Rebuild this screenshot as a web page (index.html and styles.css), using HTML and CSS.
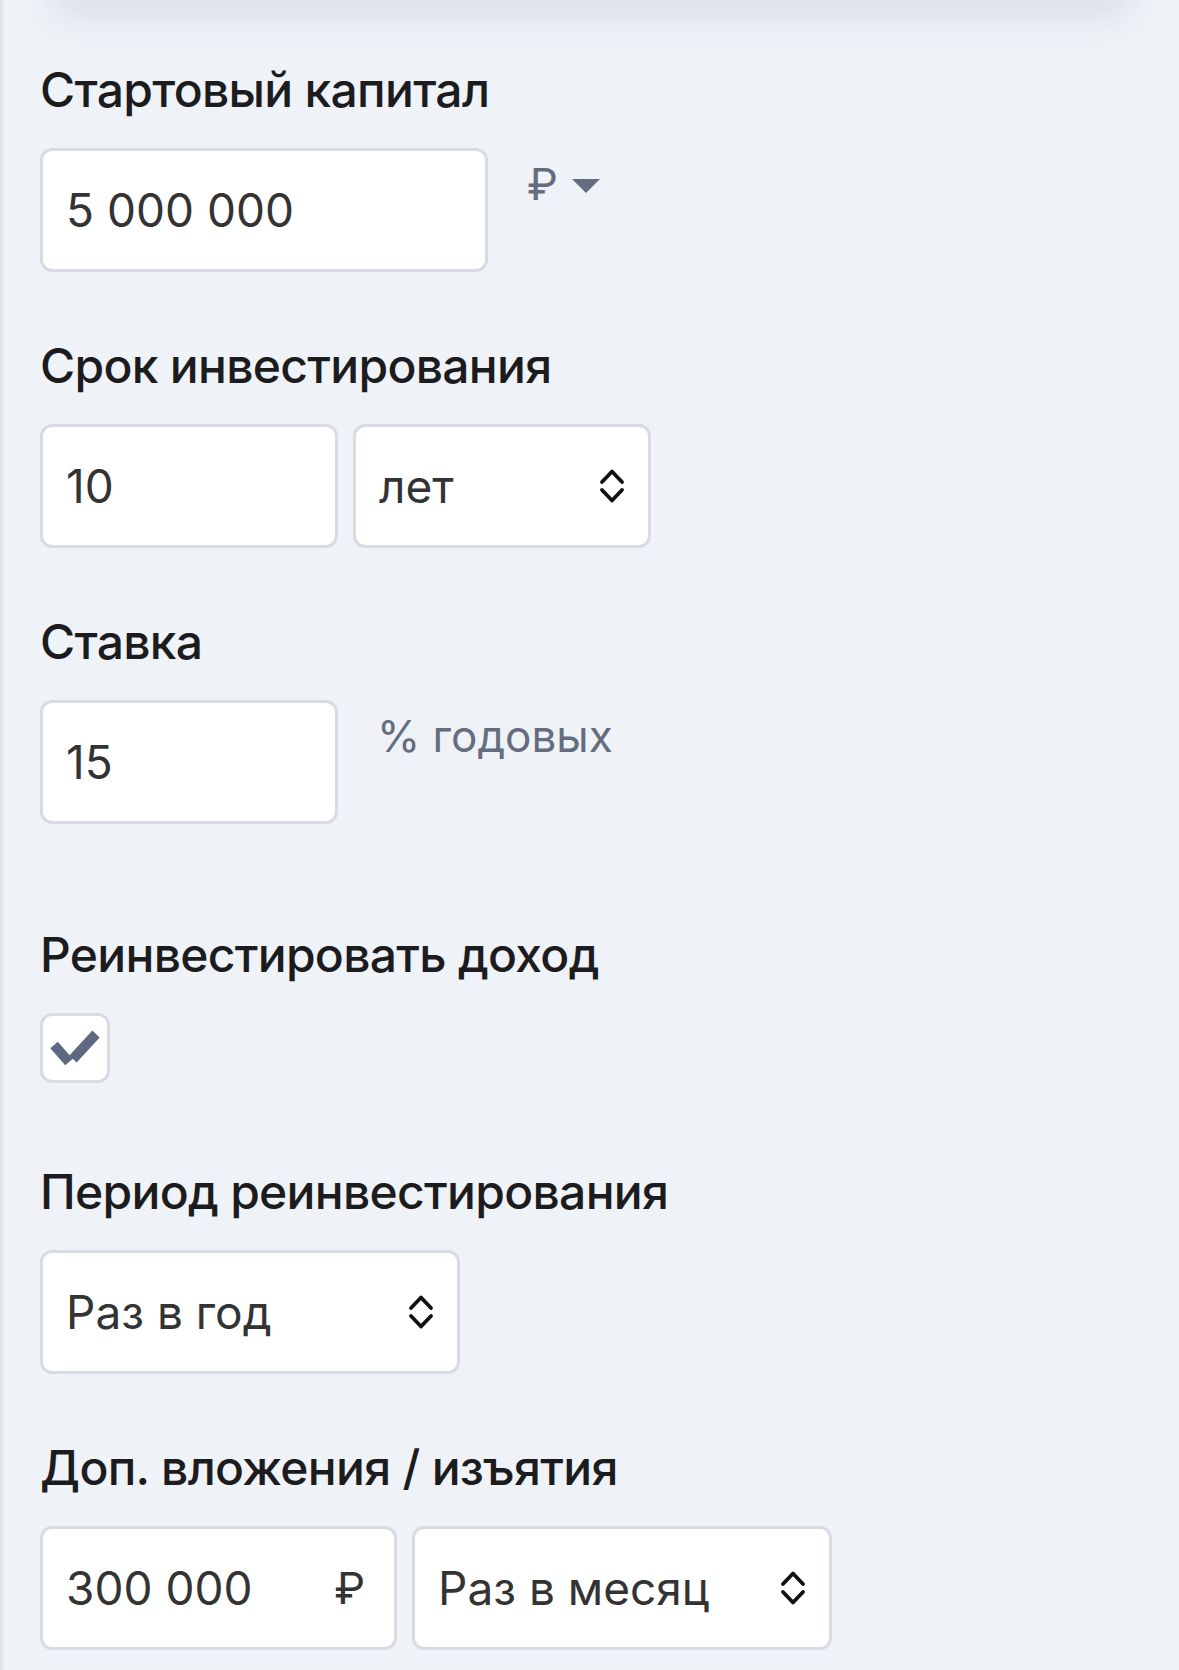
FILE: index.html
```html
<!DOCTYPE html>
<html lang="ru">
<head>
    <meta charset="UTF-8">
    <meta name="viewport" content="width=device-width, initial-scale=1.0">
    <title>Калькулятор сложного процента</title>
    <link rel="stylesheet" href="styles.css">
</head>
<body>
    <div class="card-edge"></div>
    <main class="form">
        <div class="field">
            <label class="field-label" for="capital">Стартовый капитал</label>
            <div class="field-row">
                <input class="control w-capital" id="capital" type="text" value="5 000 000">
                <div class="suffix currency">
                    <span>₽</span>
                    <svg class="caret" width="28" height="14" viewBox="0 0 28 14"><polygon points="0,0 28,0 14,14" fill="#646d80"/></svg>
                </div>
            </div>
        </div>

        <div class="field">
            <label class="field-label" for="term">Срок инвестирования</label>
            <div class="field-row">
                <input class="control w-short" id="term" type="text" value="10">
                <div class="select-wrap w-short">
                    <select class="control select">
                        <option>лет</option>
                        <option>месяцев</option>
                    </select>
                    <svg class="chevrons" width="26" height="36" viewBox="0 0 26 36"><path d="M3 14 L13 3.5 L23 14 M3 22 L13 32.5 L23 22" fill="none" stroke="#111" stroke-width="3.8" stroke-linecap="round" stroke-linejoin="round"/></svg>
                </div>
            </div>
        </div>

        <div class="field">
            <label class="field-label" for="rate">Ставка</label>
            <div class="field-row">
                <input class="control w-short" id="rate" type="text" value="15">
                <div class="suffix">% годовых</div>
            </div>
        </div>

        <div class="field field-check">
            <div class="field-label">Реинвестировать доход</div>
            <label class="checkbox">
                <input type="checkbox" checked>
                <span class="box">
                    <svg width="64" height="64" viewBox="0 0 64 64"><path d="M11 29 L26 46 M30 43 L53 18" fill="none" stroke="#5e6881" stroke-width="10"/></svg>
                </span>
            </label>
        </div>

        <div class="field">
            <label class="field-label" for="period">Период реинвестирования</label>
            <div class="field-row">
                <div class="select-wrap w-wide">
                    <select class="control select" id="period">
                        <option>Раз в год</option>
                        <option>Раз в месяц</option>
                    </select>
                    <svg class="chevrons" width="26" height="36" viewBox="0 0 26 36"><path d="M3 14 L13 3.5 L23 14 M3 22 L13 32.5 L23 22" fill="none" stroke="#111" stroke-width="3.8" stroke-linecap="round" stroke-linejoin="round"/></svg>
                </div>
            </div>
        </div>

        <div class="field">
            <label class="field-label" for="extra">Доп. вложения / изъятия</label>
            <div class="field-row">
                <div class="input-wrap w-extra">
                    <input class="control" id="extra" type="text" value="300 000">
                    <span class="inner-suffix">₽</span>
                </div>
                <div class="select-wrap w-wide">
                    <select class="control select">
                        <option>Раз в месяц</option>
                        <option>Раз в год</option>
                    </select>
                    <svg class="chevrons" width="26" height="36" viewBox="0 0 26 36"><path d="M3 14 L13 3.5 L23 14 M3 22 L13 32.5 L23 22" fill="none" stroke="#111" stroke-width="3.8" stroke-linecap="round" stroke-linejoin="round"/></svg>
                </div>
            </div>
        </div>
    </main>
</body>
</html>
```

FILE: styles.css
```css
html {
    background-color: #eff2f7;
}
body {
    margin: 0;
    min-height: 1670px;
    font-family: Inter, "Noto Sans", sans-serif;
    color: #1c1c1e;
    background-color: #eff2f7;
    border-left: 3px solid #e2e5ea;
    overflow: hidden;
}
.card-edge {
    height: 30px;
    margin: -30px 60px 0;
    background: #fff;
    box-shadow: 0 8px 36px 10px rgba(30, 40, 60, 0.09);
}
.form {
    padding: 61px 37px 0;
}
.field {
    margin-bottom: 65px;
}
.field-check {
    margin-top: 102px;
    margin-bottom: 80px;
}
.field-label {
    display: block;
    font-size: 48px;
    line-height: 58px;
    font-weight: 500;
    margin-bottom: 29px;
    letter-spacing: -0.7px;
}
.field-row {
    display: flex;
    gap: 15px;
}
.control {
    box-sizing: border-box;
    height: 124px;
    width: 100%;
    padding: 0 23px;
    border: 3px solid #d8dbe1;
    border-radius: 12px;
    background-color: #fff;
    font-family: Inter, "Noto Sans", sans-serif;
    font-size: 46px;
    color: #333;
    outline: none;
}
.w-capital {
    width: 448px;
}
.w-short {
    width: 298px;
}
.w-wide {
    width: 420px;
}
.w-extra {
    width: 357px;
}
.suffix {
    padding: 10px 0 0 24px;
    font-size: 44px;
    line-height: 53px;
    color: #646d80;
}
.currency {
    display: flex;
    align-items: center;
    gap: 14px;
    height: 53px;
}
.caret {
    margin-top: 2px;
}
.select-wrap,
.input-wrap {
    position: relative;
}
.select {
    appearance: none;
    -webkit-appearance: none;
    padding-right: 60px;
}
.chevrons {
    position: absolute;
    right: 26px;
    top: 44px;
    pointer-events: none;
}
.inner-suffix {
    position: absolute;
    right: 32px;
    top: 0;
    line-height: 124px;
    font-size: 44px;
    color: #333;
}
.checkbox input {
    display: none;
}
.box {
    display: block;
    box-sizing: border-box;
    width: 70px;
    height: 70px;
    border: 3px solid #d8dbe1;
    border-radius: 12px;
    background-color: #fff;
}
.box svg {
    display: block;
}
```
